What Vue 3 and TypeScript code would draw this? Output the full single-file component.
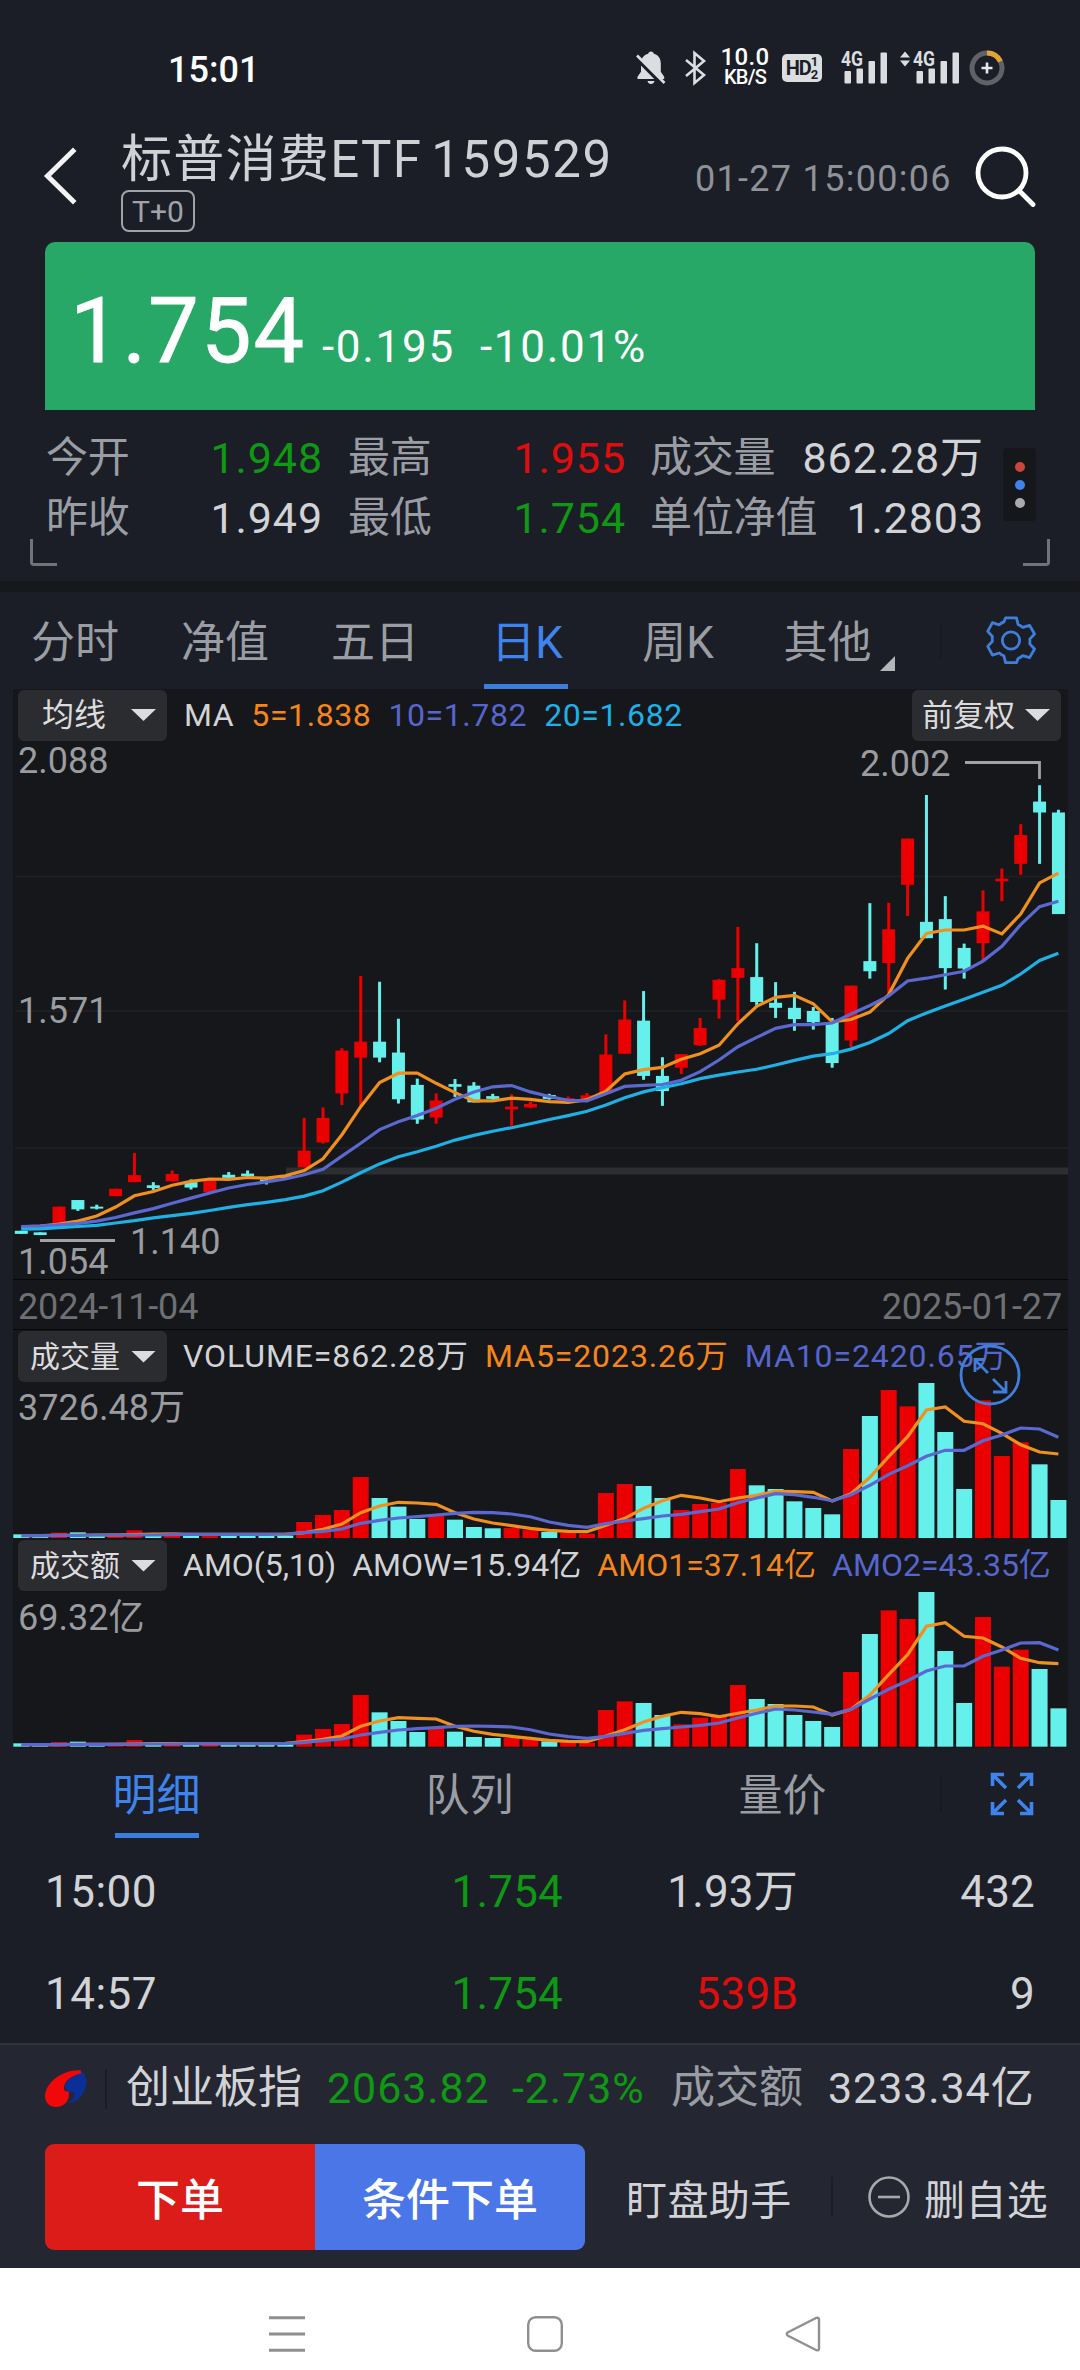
<script setup lang="ts">
type Side = 'r' | 'c'
/** side, body top, body bottom, wick top, wick bottom */
type Candle = [Side, number, number, number, number]

const STEP = 18.857
const FIRST = 21.3
const x = (i: number): number => FIRST + i * STEP
const priceY = (v: number): number => 730 + v / 2.57
const barY = (v: number): number => 1320 + v / 3

const candles: Candle[] = [
  ['c', 1287, 1295, 1287, 1295], ['c', 1291, 1298, 1291, 1298], ['r', 1225, 1268, 1225, 1268],
  ['c', 1208, 1232, 1208, 1236], ['c', 1225, 1230, 1220, 1232], ['r', 1179, 1198, 1179, 1198],
  ['r', 1144, 1162, 1087, 1162], ['c', 1170, 1177, 1162, 1182], ['r', 1141, 1160, 1132, 1160],
  ['c', 1162, 1176, 1155, 1181], ['r', 1157, 1188, 1157, 1188], ['c', 1143, 1151, 1136, 1153],
  ['c', 1140, 1147, 1132, 1150], ['c', 1155, 1161, 1150, 1168], ['c', 1147, 1151, 1147, 1151],
  ['r', 1081, 1124, 997, 1124], ['r', 997, 1060, 970, 1063], ['r', 824, 934, 818, 964],
  ['r', 801, 842, 632, 965], ['c', 801, 842, 647, 854], ['c', 829, 949, 742, 960],
  ['c', 912, 1001, 896, 1012], ['r', 952, 996, 934, 1012], ['c', 910, 917, 897, 943],
  ['c', 914, 957, 905, 957], ['c', 941, 948, 935, 950], ['r', 968, 975, 936, 1017],
  ['r', 961, 970, 955, 972], ['c', 938, 948, 935, 950], ['r', 946, 953, 942, 955],
  ['r', 939, 948, 933, 950], ['r', 834, 934, 782, 934], ['r', 744, 832, 695, 832],
  ['c', 747, 889, 671, 899], ['c', 889, 928, 841, 966], ['r', 833, 868, 833, 884],
  ['r', 766, 810, 740, 812], ['r', 642, 693, 640, 742], ['r', 612, 637, 506, 748],
  ['c', 635, 699, 548, 708], ['c', 701, 714, 648, 740], ['c', 714, 743, 673, 773],
  ['c', 722, 751, 712, 770], ['c', 751, 856, 740, 868], ['r', 657, 798, 657, 816],
  ['c', 594, 620, 445, 639], ['r', 512, 599, 444, 680], ['r', 279, 398, 279, 478],
  ['c', 493, 535, 167, 535], ['c', 486, 612, 427, 667], ['c', 560, 613, 549, 639],
  ['r', 466, 548, 412, 592], ['r', 382, 389, 356, 440], ['r', 270, 344, 242, 372],
  ['c', 184, 212, 142, 344], ['c', 212, 473, 205, 473],
]

const ma5 = [1277, 1275, 1270, 1262, 1249, 1226, 1197, 1186, 1170, 1160, 1154, 1155, 1150, 1152, 1146, 1132, 1102, 1040, 968, 906, 882, 882, 908, 932, 953, 953, 946, 949, 955, 957, 950, 928, 884, 873, 867, 846, 832, 810, 755, 710, 687, 682, 704, 750, 744, 725, 680, 587, 523, 514, 514, 504, 524, 473, 393, 368]
const ma10 = [1276, 1275, 1272, 1268, 1262, 1253, 1241, 1230, 1216, 1203, 1190, 1177, 1168, 1161, 1154, 1143, 1129, 1095, 1062, 1027, 1007, 991, 972, 949, 930, 917, 914, 930, 942, 952, 953, 935, 916, 913, 911, 900, 878, 848, 814, 790, 767, 757, 757, 753, 730, 708, 683, 645, 638, 629, 620, 594, 556, 500, 454, 440]
const ma20 = [1283, 1282, 1279, 1276, 1273, 1267, 1261, 1254, 1248, 1242, 1235, 1227, 1220, 1214, 1207, 1198, 1184, 1162, 1138, 1115, 1097, 1084, 1070, 1054, 1042, 1031, 1022, 1012, 1001, 991, 980, 964, 945, 930, 919, 909, 896, 887, 879, 872, 861, 849, 838, 832, 820, 803, 780, 747, 727, 709, 692, 674, 656, 627, 592, 574]

const volume = [643, 648, 638, 637, 648, 640, 631, 643, 637, 645, 643, 643, 645, 647, 647, 606, 585, 570, 471, 534, 560, 597, 584, 599, 621, 625, 624, 629, 636, 639, 641, 519, 492, 498, 534, 570, 552, 549, 447, 496, 507, 544, 564, 583, 387, 288, 210, 259, 189, 336, 507, 241, 408, 367, 433, 540]
const volMa5 = [647, 647, 646, 646, 645, 645, 644, 642, 642, 643, 643, 643, 643, 643, 643, 638, 628, 612, 578, 558, 547, 549, 553, 578, 597, 609, 617, 625, 631, 634, 635, 616, 595, 565, 542, 526, 534, 545, 534, 526, 514, 515, 517, 543, 521, 472, 410, 350, 270, 261, 304, 311, 340, 374, 396, 402]
const volMa10 = [647, 647, 646, 646, 645, 645, 645, 645, 644, 643, 643, 643, 643, 643, 642, 638, 634, 627, 610, 601, 594, 590, 585, 580, 577, 578, 582, 590, 606, 616, 622, 611, 603, 596, 588, 583, 575, 567, 548, 534, 521, 524, 532, 542, 524, 496, 463, 437, 409, 391, 391, 362, 345, 324, 327, 352]

const amount = [1270, 1274, 1266, 1265, 1274, 1268, 1260, 1272, 1267, 1272, 1270, 1271, 1272, 1273, 1273, 1244, 1227, 1212, 1125, 1177, 1203, 1236, 1222, 1235, 1251, 1254, 1254, 1258, 1264, 1267, 1268, 1170, 1144, 1149, 1185, 1213, 1193, 1190, 1095, 1137, 1152, 1185, 1203, 1221, 1056, 942, 871, 897, 816, 993, 1149, 891, 1040, 989, 1047, 1165]
const amtMa5 = [1274, 1274, 1274, 1273, 1273, 1273, 1272, 1271, 1271, 1271, 1271, 1271, 1271, 1271, 1270, 1265, 1258, 1248, 1219, 1203, 1193, 1195, 1197, 1219, 1234, 1243, 1249, 1255, 1261, 1264, 1265, 1248, 1229, 1206, 1189, 1177, 1181, 1190, 1180, 1170, 1158, 1158, 1161, 1185, 1168, 1125, 1064, 1004, 919, 908, 949, 954, 981, 1015, 1028, 1031]
const amtMa10 = [1274, 1274, 1274, 1273, 1273, 1273, 1272, 1272, 1272, 1271, 1271, 1271, 1271, 1271, 1271, 1267, 1262, 1257, 1245, 1237, 1230, 1226, 1223, 1219, 1218, 1219, 1221, 1229, 1242, 1250, 1255, 1249, 1240, 1231, 1226, 1221, 1216, 1209, 1194, 1180, 1167, 1170, 1176, 1183, 1168, 1137, 1108, 1082, 1053, 1038, 1038, 1009, 990, 969, 968, 990]

const points = (values: number[], scale: (v: number) => number): string =>
  values.map((v, i) => `${x(i).toFixed(1)},${scale(v).toFixed(1)}`).join(' ')

const barPanels = [
  {
    name: '成交量', top: 1383, height: 156, base: 1538, max: '3726.48万', maxY: 1419.5,
    bars: volume, fast: volMa5, slow: volMa10, expandable: true,
    legend: [
      { text: 'VOLUME=862.28万', tone: 'plain' },
      { text: 'MA5=2023.26万', tone: 'fast' },
      { text: 'MA10=2420.65万', tone: 'slow' },
    ],
  },
  {
    name: '成交额', top: 1592, height: 156, base: 1746.7, max: '69.32亿', maxY: 1630,
    bars: amount, fast: amtMa5, slow: amtMa10, expandable: false,
    legend: [
      { text: 'AMO(5,10)', tone: 'plain' },
      { text: 'AMOW=15.94亿', tone: 'plain' },
      { text: 'AMO1=37.14亿', tone: 'fast' },
      { text: 'AMO2=43.35亿', tone: 'slow' },
    ],
  },
]

const quotes = [
  { label: '今开', value: '1.948', tone: 'down' },
  { label: '最高', value: '1.955', tone: 'up' },
  { label: '成交量', value: '862.28万', tone: 'plain' },
  { label: '昨收', value: '1.949', tone: 'plain' },
  { label: '最低', value: '1.754', tone: 'down' },
  { label: '单位净值', value: '1.2803', tone: 'plain' },
]
const periods = ['分时', '净值', '五日', '日K', '周K', '其他']
const details = ['明细', '队列', '量价']
const trades = [
  { time: '15:00', price: '1.754', size: '1.93万', tone: 'plain', count: '432' },
  { time: '14:57', price: '1.754', size: '539B', tone: 'up', count: '9' },
]
</script>

<template>
  <div class="screen">
    <div class="status">
      <span class="clock">15:01</span>
      <div class="status-icons">
        <svg width="30" height="34" viewBox="0 0 30 34" fill="#dcdde0">
          <path d="M15 0.5c1.6 0 2.6 1 2.8 2.2 4.600 1.200 7 5 7 9.600v8.500l3.400 5v2.200H1.500v-2.200l3.500-5v-8.500c0-4.600 2.600-8.400 7.200-9.600C12.400 1.500 13.400 0.500 15 0.500zM11.500 30h7c-.4 2-1.800 3-3.500 3s-3.100-1-3.500-3z" />
          <path d="M0.500 7L27 34" stroke="#1b1e26" stroke-width="4" />
          <path d="M1 4.500L28.500 32" stroke="#dcdde0" stroke-width="2.600" />
        </svg>
        <svg class="bt" width="21" height="34" viewBox="0 0 21 34" fill="none" stroke="#dcdde0" stroke-width="2.600">
          <path d="M1 9l18 15-9.500 8V2l9.500 8L1 25" />
        </svg>
        <div class="net"><span class="net-num">10.0</span><span class="net-unit">KB/S</span></div>
        <div class="hd"><span>HD</span><span class="hd-n"><i>1</i><i>2</i></span></div>
        <svg class="sig" width="46" height="36" viewBox="0 0 46 36" fill="#dcdde0">
          <text x="0" y="16" font-family="Roboto, sans-serif" font-weight="700" font-size="20" textLength="22" lengthAdjust="spacingAndGlyphs">4G</text>
          <rect x="3.500" y="21" width="6.500" height="12.500" rx="1" /><rect x="15.500" y="18.500" width="6.500" height="15" rx="1" />
          <rect x="27.500" y="11" width="6.500" height="22.500" rx="1" /><rect x="39.500" y="2.500" width="6.500" height="31" rx="1" />
        </svg>
        <svg class="sig2" width="61" height="36" viewBox="0 0 61 36" fill="#dcdde0">
          <path d="M1 7.500L6 1.500l5 6zM1 10.500l5 6 5-6z" />
          <text x="14" y="16" font-family="Roboto, sans-serif" font-weight="700" font-size="20" textLength="22" lengthAdjust="spacingAndGlyphs">4G</text>
          <rect x="17.500" y="21" width="6.500" height="12.500" rx="1" /><rect x="29.500" y="18.500" width="6.500" height="15" rx="1" />
          <rect x="41.500" y="11" width="6.500" height="22.500" rx="1" /><rect x="53.500" y="2.500" width="6.500" height="31" rx="1" />
        </svg>
        <svg class="ring" width="36" height="36" viewBox="0 0 36 36" fill="none">
          <circle cx="18" cy="18" r="15" stroke="#606268" stroke-width="5" />
          <path d="M18 3a15 15 0 0 1 13.500 8.400" stroke="#e0a536" stroke-width="5" />
          <path d="M12.500 18h11M18 12.500v11" stroke="#e8e8ea" stroke-width="2.600" />
        </svg>
      </div>
    </div>

    <header class="header">
      <svg class="back" width="34" height="60" viewBox="0 0 34 60" fill="none" stroke="#f4f4f5" stroke-width="5">
        <path d="M30 5L4.500 30 30 55" stroke-linecap="square" />
      </svg>
      <div class="heading">
        <h1><span>标普消费ETF</span><span class="code">159529</span></h1>
        <span class="tag">T+0</span>
      </div>
      <span class="stamp">01-27 15:00:06</span>
      <svg class="search" width="64" height="66" viewBox="0 0 64 66" fill="none" stroke="#fff" stroke-width="4.800">
        <circle cx="29" cy="30" r="24" /><path d="M46 47.500l14 14" stroke-linecap="round" />
      </svg>
    </header>

    <section class="banner">
      <span class="price">1.754</span><span class="chg">-0.195</span><span>-10.01%</span>
    </section>

    <section class="quote">
      <div class="quote-grid">
        <div v-for="q in quotes" :key="q.label" class="cell">
          <span class="label">{{ q.label }}</span><span class="value" :class="q.tone">{{ q.value }}</span>
        </div>
      </div>
      <div class="dots"><i class="d1" /><i class="d2" /><i class="d3" /></div>
      <i class="corner left" /><i class="corner right" />
    </section>

    <nav class="tabs">
      <span v-for="p in periods" :key="p" class="tab" :class="{ on: p === '日K' }">{{ p }}<i v-if="p === '其他'" class="more" /></span>
      <i class="sep" />
      <svg class="gear" width="50" height="51" viewBox="0 0 52 52" fill="none" stroke="#3f7fdc" stroke-width="2.900" stroke-linejoin="round">
        <path d="M20.300 3h11.400l1.700 6.800q2.700 1.100 4.800 3l7.100-2.200 5.200 8.900-5 5.300q.4 2.700 0 4.900l5 5.300-5.200 8.900-7.100-2.100q-2.100 1.900-4.800 3L31.700 49H20.300l-1.700-6.900q-2.700-1.100-4.800-3l-7.100 2.100-4.900-8.900 4.900-5.300q-.4-2.200 0-4.900l-4.900-5.300 4.900-8.900 7.100 2.200q2.100-1.900 4.800-3z" transform="translate(0 -.5) scale(1 1.010)" />
        <circle cx="26" cy="26" r="9" />
      </svg>
    </nav>

    <section class="chart">
      <div class="legend">
        <button class="pick short">均线<i /></button>
        <span class="plain">MA</span><span class="fast">5=1.838</span><span class="slow">10=1.782</span><span class="long">20=1.682</span>
        <button class="pick end">前复权<i /></button>
      </div>
      <svg class="plot" width="1055" height="538" viewBox="13 741 1055 538">
        <g stroke="#1d1f22" stroke-width="2"><path d="M15 876.500H1068M15 1011H1068M15 1148H1068" /></g>
        <path d="M286 1171H1068" stroke="#2d2e31" stroke-width="7" />
        <g class="axis">
          <text x="18" y="773">2.088</text><text x="18" y="1022.500">1.571</text>
          <text x="18" y="1273.500">1.054</text><text x="130" y="1254">1.140</text>
          <text x="860" y="776">2.002</text>
        </g>
        <g v-for="(c, i) in candles" :key="i" :class="c[0]">
          <rect :x="x(i) - 6.500" width="13" :y="priceY(c[1])" :height="priceY(c[2]) - priceY(c[1])" />
          <rect :x="x(i) - 1.500" width="3" :y="priceY(c[3])" :height="priceY(c[4]) - priceY(c[3])" />
        </g>
        <g class="lines">
          <polyline class="fast" :points="points(ma5, priceY)" />
          <polyline class="slow" :points="points(ma10, priceY)" />
          <polyline class="long" :points="points(ma20, priceY)" />
        </g>
        <path d="M965 762.500H1039.500V779M40 1240.500H115" fill="none" stroke="#a2a2a4" stroke-width="2.800" />
      </svg>
      <div class="dates"><span>2024-11-04</span><span>2025-01-27</span></div>

      <div v-for="p in barPanels" :key="p.name" class="panel">
        <div class="legend" :class="{ wide: p.expandable }">
          <button class="pick">{{ p.name }}<i /></button>
          <span v-for="l in p.legend" :key="l.text" :class="l.tone">{{ l.text }}</span>
        </div>
        <svg class="plot" width="1055" :height="p.height" :viewBox="`13 ${p.top} 1055 ${p.height}`">
          <g class="axis"><text x="18" :y="p.maxY">{{ p.max }}</text></g>
          <rect v-for="(v, i) in p.bars" :key="i" :class="candles[i][0]" :x="x(i) - 8" width="16" :y="barY(v)" :height="p.base - barY(v)" />
          <g class="lines">
            <polyline class="fast" :points="points(p.fast, barY)" />
            <polyline class="slow" :points="points(p.slow, barY)" />
          </g>
        </svg>
        <svg v-if="p.expandable" class="zoomer" width="62" height="62" viewBox="0 0 62 62" fill="none" stroke="#3f7fdc" stroke-width="2.800">
          <circle cx="31" cy="31" r="29" /><path d="M29 29L16 16M16 28V15.500H26M34 35l12.500 12.500M47 37v11H34" />
        </svg>
      </div>
    </section>

    <nav class="tabs lower">
      <span v-for="d in details" :key="d" class="tab" :class="{ on: d === '明细' }">{{ d }}</span>
      <i class="sep" />
      <svg class="full" width="44" height="44" viewBox="0 0 44 44" fill="none" stroke="#3f84ec" stroke-width="3.600">
        <path d="M2.500 14V2.500H14M2.500 2.500L16 16M30 2.500H41.500V14M41.500 2.500L28 16M2.500 30V41.500H14M2.500 41.500L16 28M30 41.500H41.500V30M41.500 41.500L28 28" />
      </svg>
    </nav>

    <section class="trades">
      <div v-for="t in trades" :key="t.time" class="trade">
        <span>{{ t.time }}</span><span class="down">{{ t.price }}</span><span :class="t.tone">{{ t.size }}</span><span>{{ t.count }}</span>
      </div>
    </section>

    <footer class="dock">
      <div class="index">
        <svg width="42" height="38" viewBox="0 0 42 38">
          <path d="M37 1.500C43 6 43 17 37 25c-4 6-9 8-14 8 5-3 7-7 6-11-3 1-9-1-9-5 0-6 9-13 17-15.500z" fill="#0b2f96" />
          <path d="M36 .5C22-1.500 1 10 0 26c0 7 5 11 11 11 7 0 13-5 13-13 0-2 0-2-1-3-2 1-4 0-4-3 0-7 8-13 17-14.500z" fill="#f20808" />
        </svg>
        <i class="bar" />
        <span class="idx-name">创业板指</span><span class="idx down a">2063.82</span><span class="idx down b">-2.73%</span>
        <span class="idx-name muted">成交额</span><span class="idx last">3233.34亿</span>
      </div>
      <div class="actions">
        <button class="buy">下单</button><button class="cond">条件下单</button>
        <span class="act watch">盯盘助手</span>
        <i class="bar" />
        <svg width="42" height="42" viewBox="0 0 42 42" fill="none" stroke="#a6a8ad" stroke-width="2.600"><circle cx="21" cy="21" r="19.500" /><path d="M10 21h22" /></svg>
        <span class="act">删自选</span>
      </div>
    </footer>

    <div class="sysnav">
      <svg width="36" height="36" viewBox="0 0 36 36" stroke="#8f8f8f" stroke-width="3"><path d="M0 1.700h36M0 18h36M0 34.300h36" /></svg>
      <svg width="36" height="36" viewBox="0 0 36 36" fill="none" stroke="#8f8f8f" stroke-width="2.400"><rect x="1.200" y="1.200" width="33.600" height="33.600" rx="7.500" /></svg>
      <svg width="36" height="36" viewBox="0 0 36 36" fill="none" stroke="#8f8f8f" stroke-width="2.400" stroke-linejoin="round"><path d="M31.500 1.800L3 16.200q-2.500 1.800 0 3.600L31.500 34.200q2.500.8 2.500-2V3.800q0-2.600-2.500-2z" /></svg>
    </div>
  </div>
</template>

<style>
body { background: #1b1e26; }
</style>

<style scoped>
.screen { width: 1080px; height: 2370px; overflow: hidden; background: #1b1e26; color: #d2d3d7; font-family: Roboto, "Noto Sans CJK SC", sans-serif; display: flex; flex-direction: column; white-space: nowrap; }
.screen > * { flex: none; }
svg { display: block; flex: none; overflow: visible; }
i { font-style: normal; display: block; }
button { border: 0; padding: 0; font-family: inherit; color: inherit; }
.plain { color: #d2d3d7; }
.up { color: #e20c0c; }
.down { color: #0f9813; }

.status { height: 128px; display: flex; box-sizing: border-box; padding: 50px 0 0 168px; }
.clock { width: 468px; font-size: 36px; line-height: 41px; font-weight: 500; color: #fff; }
.status-icons { display: flex; align-items: center; height: 36px; }
.bt { margin-left: 19px; }
.net { width: 48px; margin-left: 15px; margin-right: -1px; display: flex; flex-direction: column; align-items: center; color: #fff; font-weight: 500; }
.net-num { font-size: 24px; line-height: 19px; letter-spacing: .3px; }
.net-unit { font-size: 20px; line-height: 21px; letter-spacing: -.8px; }
.hd { width: 40px; height: 28px; margin-left: 14px; border-radius: 5px; background: #dcdde0; color: #1b1e26; font-weight: 700; font-size: 20px; line-height: 28px; display: flex; justify-content: center; letter-spacing: -1px; }
.hd-n { display: flex; font-size: 13px; line-height: 13px; flex-direction: column; padding-top: 1px; letter-spacing: 0; }
.sig { margin-left: 19px; }
.sig2 { margin-left: 12px; }
.ring { margin-left: 9px; }

.header { height: 114px; display: flex; }
.back { margin: 18px 0 0 43px; }
.heading { margin-left: 44px; width: 574px; }
h1 { margin: 0; font-weight: 400; font-size: 51px; line-height: 63px; height: 60px; letter-spacing: 1.300px; display: flex; color: #d0d1d5; }
.code { margin-left: 9px; letter-spacing: 1.600px; }
.tag { display: block; box-sizing: border-box; width: 74px; height: 42px; margin-top: 2px; border: 2px solid #a0a3a8; border-radius: 8px; font-size: 30px; line-height: 39px; text-align: center; color: #a0a3a8; }
.stamp { font-size: 36px; line-height: 102px; width: 278px; letter-spacing: 1.300px; color: #8f9298; }
.search { margin-top: 15px; }

.banner { box-sizing: border-box; width: 990px; height: 168px; margin-left: 45px; padding-left: 25px; border-radius: 10px 10px 0 0; background: #27a866; color: #fff; display: flex; align-items: baseline; font-size: 44px; line-height: 180px; letter-spacing: 1.700px; }
.price { font-size: 90px; letter-spacing: 2px; width: 252px; -webkit-text-stroke: .8px #fff; }
.chg { width: 158px; }

.quote { position: relative; height: 171px; padding: 18px 0 0 46px; box-sizing: border-box; display: flex; }
.quote-grid { display: grid; grid-template-columns: 277px 278px 333px; column-gap: 25px; grid-auto-rows: 60px; width: 938px; }
.cell { display: flex; justify-content: space-between; line-height: 60px; font-size: 43px; }
.label { font-size: 42px; letter-spacing: -.2px; color: #9a9da3; }
.cell:nth-child(3n) .label { margin-left: -1px; }
.value { letter-spacing: .9px; }
.dots { width: 33px; height: 73px; margin: 20px 0 0 19px; background: #15171b; border-radius: 4px; display: flex; flex-direction: column; align-items: center; justify-content: center; gap: 8px; }
.dots i { width: 10px; height: 10px; border-radius: 50%; }
.d1 { background: #c8473a; }
.d2 { background: #3f84ec; }
.d3 { background: #a9abaf; }
.corner { position: absolute; top: 129px; width: 24px; height: 24px; border-bottom: 3px solid #70737a; }
.corner.left { left: 30px; border-left: 3px solid #70737a; border-bottom-left-radius: 4px; }
.corner.right { right: 30px; border-right: 3px solid #70737a; border-bottom-right-radius: 4px; }

.tabs { height: 108px; padding-top: 11px; box-sizing: border-box; background: linear-gradient(#16181b 0 11px, transparent 11px); display: flex; align-items: center; font-size: 44px; color: #9a9da3; }
.tab { position: relative; width: 150px; height: 97px; line-height: 103px; text-align: center; }
.tabs .tab:nth-child(4) { text-indent: 4px; }
.tabs .tab:nth-child(5) { text-indent: 6px; }
.tabs .tab:nth-child(6) { text-indent: 5px; }
.tab.on { color: #3f84ec; }
.tab.on::after { content: ""; position: absolute; left: 50%; bottom: 0; width: 84px; height: 5px; margin-left: -41px; background: #3a7fdf; }
.more { position: absolute; left: 130px; bottom: 18px; width: 15px; height: 15px; background: #b4b6ba; clip-path: polygon(100% 0, 100% 100%, 0 100%); }
.sep { width: 2px; height: 36px; margin-left: 40px; background: #171a20; }
.gear { margin-left: 44px; }
.tabs.lower { height: 92px; padding-top: 0; background: none; }
.lower .tab { width: 313px; height: 92px; line-height: 96px; text-indent: 0; }
.lower .tab.on::after { bottom: 2px; margin-left: -42px; }
.lower .sep { margin-left: 1px; }
.full { margin-left: 48px; }

.chart { width: 1055px; height: 1059px; margin-left: 13px; background: #15171a; }
.legend { height: 52px; display: flex; align-items: center; padding: 0 7px 0 5px; font-size: 32px; line-height: 51px; letter-spacing: .6px; gap: 17px; }
.legend .fast { color: #f5861c; }
.legend .slow { color: #5766cc; }
.legend .long { color: #1fb0e6; }
.pick { width: 149px; height: 51px; border-radius: 6px; background: #2b2c30; font-size: 30px; line-height: 51px; display: flex; align-items: center; justify-content: space-between; box-sizing: border-box; padding: 0 11px 0 12px; color: #dcdcde; }
.pick.short { padding-left: 24px; font-size: 32px; }
.pick.end { margin-left: auto; font-size: 31px; padding-left: 10px; }
.pick i { width: 25px; height: 12px; background: #dcdcde; clip-path: polygon(0 0, 100% 0, 50% 100%); }
.axis text { font-family: Roboto, "Noto Sans CJK SC", sans-serif; font-size: 36px; fill: #9b9ca0; }
.plot { overflow: visible; }
.r { fill: #ea0000; }
.c { fill: #66f0ec; }
.lines polyline { fill: none; stroke-width: 3.200; }
.lines .fast { stroke: #f0901f; }
.lines .slow { stroke: #5b68d0; }
.lines .long { stroke: #1fb0e6; }
.dates { height: 51px; box-sizing: border-box; padding: 0 6px 0 5px; border-top: 1px solid #060708; border-bottom: 1px solid #060708; display: flex; justify-content: space-between; font-size: 36px; line-height: 54px; letter-spacing: -.15px; color: #6e7074; }
.panel { position: relative; height: 209px; }
.panel .legend { height: 53px; gap: 16px; letter-spacing: 0; }
.panel .legend.wide { letter-spacing: .9px; }
.panel .legend.wide .pick { letter-spacing: 0; }
.zoomer { position: absolute; left: 946px; top: 14px; }

.trades { height: 203px; }
.trade { height: 102px; display: grid; grid-template-columns: 200px 318px 235px 237px; padding-left: 45px; font-size: 44px; line-height: 104px; letter-spacing: .2px; text-align: right; }
.trade > :first-child { text-align: left; letter-spacing: .5px; }

.dock { height: 225px; background: #242731; box-sizing: border-box; border-top: 2px solid #30333c; }
.index { height: 87px; display: flex; align-items: center; padding-left: 45px; font-size: 43px; line-height: 87px; }
.index .bar { margin: 0 19px 0 18px; }
.bar { width: 2px; height: 40px; background: #1b1d25; }
.idx-name { font-size: 44px; }
.idx { letter-spacing: .9px; }
.a { margin-left: 25px; width: 185px; }
.b { width: 159px; }
.muted { color: #9a9da3; }
.last { margin-left: 25px; }
.actions { display: flex; align-items: center; padding: 12px 0 0 45px; }
.actions button { width: 270px; height: 106px; font-size: 44px; font-weight: 500; color: #fff; }
.buy { background: #dc1c19; border-radius: 9px 0 0 9px; }
.cond { background: #4a76e8; border-radius: 0 9px 9px 0; }
.act { font-size: 41px; letter-spacing: .4px; }
.watch { margin-left: 41px; width: 205px; }
.actions svg { margin: 0 14px 0 35px; }

.sysnav { height: 102px; background: #fff; display: flex; box-sizing: border-box; padding: 48px 0 0 269px; gap: 222px; }
</style>
